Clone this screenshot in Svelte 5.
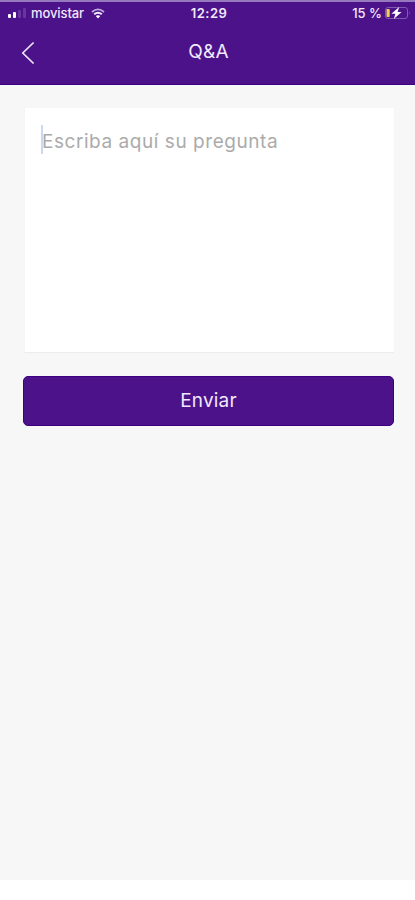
<script>
	let title = 'Q&A'
	let placeholder = 'Escriba aquí su pregunta'
	let question = ''

	const bars = [4, 6, 8, 10]
</script>

<div class="screen">
	<header>
		<div class="status">
			<div class="carrier">
				<span class="signal">
					{#each bars as height, i}
						<i class:off={i > 1} style="height: {height}px"></i>
					{/each}
				</span>
				<span class="operator">movistar</span>
				<svg class="wifi" width="14" height="11" viewBox="0 0 14 11" fill="none" stroke="#f4edff">
					<path d="M1 4Q7-1.2 13 4" stroke-width="1.8" opacity=".7" />
					<path d="M3.2 6.3Q7 3.1 10.8 6.3" stroke-width="2" />
					<path d="M4.7 8Q7 6.3 9.3 8L7 10.4z" fill="#fff" stroke="none" />
				</svg>
			</div>
			<span class="time">12:29</span>
			<div class="power">
				<span class="percent">15 %</span>
				<svg width="26" height="12" viewBox="0 0 26 12">
					<rect x=".5" y=".5" width="22" height="11" rx="2.5" fill="none" stroke="#8059b2" />
					<rect x="1.5" y="2" width="3.2" height="8" rx=".7" fill="#f3cf58" />
					<path d="M24 4.2q1.7 1.8 0 3.6z" fill="#8059b2" />
					<path d="M14.2 0L6.4 6.8H10.4L8.8 12L16.6 5.1H12.6z" fill="#fff" />
				</svg>
			</div>
		</div>
		<nav>
			<button class="back" aria-label="Volver">
				<svg width="14" height="24" viewBox="0 0 14 24" fill="none" stroke="#eee2fb" stroke-width="1.7">
					<path d="M12.6 1.5L1.8 12L12.6 22.5" />
				</svg>
			</button>
			<h1>{title}</h1>
		</nav>
	</header>

	<main>
		<div class="field">
			<span class="caret"></span>
			<span class="placeholder">{question || placeholder}</span>
		</div>
		<button class="send"><span>Enviar</span></button>
	</main>
</div>

<style>
	:global(body) {
		margin: 0;
		background: #fff;
	}

	.screen {
		height: 880px;
		background: #f7f7f7;
		font-family: Inter, "Liberation Sans", sans-serif;
	}

	header {
		height: 85px;
		box-sizing: border-box;
		border-top: 2px solid #9678bf;
		border-bottom: 1px solid #3c007e;
		background: #4b1289;
		color: #f1e8fc;
	}

	.status {
		display: grid;
		grid-template-columns: 1fr auto 1fr;
		align-items: center;
		height: 22px;
		padding: 0 4px 0 8px;
		font-size: 13px;
		line-height: 16px;
	}

	.carrier, .power {
		display: flex;
		align-items: center;
	}

	.signal {
		display: flex;
		align-items: flex-end;
		gap: 2px;
		width: 23px;
		height: 10px;
	}

	.signal i {
		width: 3px;
		border-radius: 1px;
		background: #fff;
	}

	.signal i.off {
		background: #67379d;
	}

	.operator {
		font-weight: 500;
		letter-spacing: -0.1px;
	}

	.wifi {
		margin-left: 7px;
	}

	.time {
		margin-left: -1px;
		font-weight: 600;
		letter-spacing: 0.5px;
	}

	.power {
		justify-content: flex-end;
		gap: 3px;
	}

	.percent {
		font-weight: 500;
	}

	nav {
		display: grid;
		grid-template-columns: 60px 1fr 60px;
		align-items: center;
		height: 56px;
	}

	button {
		border: 0;
		font: inherit;
		color: inherit;
	}

	.back {
		justify-self: start;
		display: flex;
		padding: 2px 0 0 21px;
		background: none;
	}

	h1 {
		margin: 0;
		text-align: center;
		text-indent: 2px;
		font-size: 19px;
		font-weight: 400;
		line-height: 24px;
		letter-spacing: 0.2px;
	}

	main {
		padding: 23px 21px 0 23px;
	}

	.field {
		display: flex;
		align-items: flex-start;
		height: 244px;
		margin-left: 2px;
		padding: 17px 16px 0;
		box-sizing: border-box;
		background: #fff;
		box-shadow: 0 1px 1px #ececec;
	}

	.caret {
		flex: none;
		width: 2px;
		height: 29px;
		margin-right: -1px;
		background: #ccd8f0;
	}

	.placeholder {
		padding-top: 4px;
		color: #ababab;
		font-size: 19px;
		font-weight: 400;
		line-height: 26px;
		letter-spacing: 0.55px;
		white-space: nowrap;
	}

	.send {
		display: block;
		width: 100%;
		height: 50px;
		margin-top: 24px;
		padding: 0 0 2px;
		border: 1px solid #3d0080;
		border-radius: 5px;
		background: #4b1289;
		color: #f1e8fc;
		font-size: 19px;
		font-weight: 400;
		letter-spacing: 0.2px;
	}
</style>
